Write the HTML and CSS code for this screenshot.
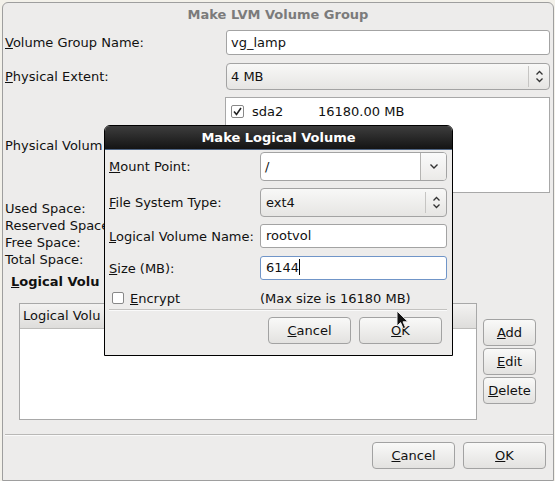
FILE: index.html
```html
<!DOCTYPE html>
<html lang="en">
<head>
    <meta charset="UTF-8">
    <meta name="viewport" content="width=device-width, initial-scale=1.0">
    <title>Make LVM Volume Group</title>
    <link rel="stylesheet" href="styles.css">
</head>
<body>
    <div class="win">
        <div class="win-title">Make LVM Volume Group</div>

        <div class="row row-name">
            <span class="lbl"><u>V</u>olume Group Name:</span>
            <div class="field entry">vg_lamp</div>
        </div>
        <div class="row row-extent">
            <span class="lbl"><u>P</u>hysical Extent:</span>
            <div class="field combo">
                <span class="combo-text">4 MB</span>
                <span class="combo-arrow">
                    <svg width="9" height="13" viewBox="0 0 9 13"><path d="M1.5 4.5 L4.5 1.5 L7.5 4.5 M1.5 8.5 L4.5 11.5 L7.5 8.5" fill="none" stroke="#333" stroke-width="1.3"/></svg>
                </span>
            </div>
        </div>
        <div class="row">
            <span class="lbl">Physical Volum</span>
            <div class="field pv-list">
                <div class="pv-row">
                    <span class="check">
                        <svg width="11" height="11" viewBox="0 0 11 11"><path d="M2 5.5 L4.5 8.5 L9 2" fill="none" stroke="#222" stroke-width="1.6"/></svg>
                    </span>
                    <span class="pv-name">sda2</span>
                    <span>16180.00 MB</span>
                </div>
            </div>
        </div>

        <!-- values sit under the dialog, only the labels show -->
        <div class="space-info">
            <div>Used Space:</div>
            <div>Reserved Space</div>
            <div>Free Space:</div>
            <div>Total Space:</div>
        </div>

        <div class="lv-heading"><u>L</u>ogical Volu</div>

        <div class="lv-area">
            <div class="lv-table">
                <div class="lv-head">Logical Volu</div>
            </div>
            <div class="lv-buttons">
                <button class="btn"><u>A</u>dd</button>
                <button class="btn"><u>E</u>dit</button>
                <button class="btn"><u>D</u>elete</button>
            </div>
        </div>

        <div class="separator"></div>

        <div class="actions">
            <button class="btn btn-wide"><u>C</u>ancel</button>
            <button class="btn btn-wide"><u>O</u>K</button>
        </div>
    </div>

    <div class="dialog">
        <div class="dialog-title">Make Logical Volume</div>
        <div class="dialog-body">
            <div class="drow drow-mount">
                <span class="dlbl"><u>M</u>ount Point:</span>
                <div class="field combo-entry">
                    <span class="combo-entry-text">/</span>
                    <span class="combo-entry-btn">
                        <svg width="10" height="7" viewBox="0 0 10 7"><path d="M1.5 1.5 L5 5 L8.5 1.5" fill="none" stroke="#333" stroke-width="1.4"/></svg>
                    </span>
                </div>
            </div>
            <div class="drow drow-fs">
                <span class="dlbl"><u>F</u>ile System Type:</span>
                <div class="field combo combo-fs">
                    <span class="combo-text">ext4</span>
                    <span class="combo-arrow">
                        <svg width="9" height="13" viewBox="0 0 9 13"><path d="M1.5 4.5 L4.5 1.5 L7.5 4.5 M1.5 8.5 L4.5 11.5 L7.5 8.5" fill="none" stroke="#333" stroke-width="1.3"/></svg>
                    </span>
                </div>
            </div>
            <div class="drow drow-name">
                <span class="dlbl"><u>L</u>ogical Volume Name:</span>
                <div class="field entry entry-small">rootvol</div>
            </div>
            <div class="drow drow-size">
                <span class="dlbl"><u>S</u>ize (MB):</span>
                <div class="field entry entry-small entry-focus">6144<span class="caret"></span></div>
            </div>
            <div class="drow drow-encrypt">
                <span class="dlbl encrypt">
                    <span class="check check-off"></span>
                    <span><u>E</u>ncrypt</span>
                </span>
                <span class="max-size">(Max size is 16180 MB)</span>
            </div>
            <div class="dialog-sep"></div>
            <div class="dialog-actions">
                <button class="btn btn-wide"><u>C</u>ancel</button>
                <button class="btn btn-wide"><u>O</u>K</button>
            </div>
        </div>
    </div>

    <svg class="pointer" width="14" height="21" viewBox="0 0 14 21">
        <path d="M1 1 L1 16 L4.6 12.6 L7.2 18.6 L9.6 17.6 L7 11.8 L12 11.8 Z" fill="#111" stroke="#eee" stroke-width="1"/>
    </svg>
</body>
</html>
```

FILE: styles.css
```css
* {
    box-sizing: border-box;
}

body {
    margin: 0;
    width: 555px;
    height: 481px;
    overflow: hidden;
    background-color: #f3f1ea;
    font-family: "DejaVu Sans", sans-serif;
    font-size: 13px;
    color: #111;
    position: relative;
}

u {
    text-decoration: underline;
    text-underline-offset: 1px;
}

/* main window */
.win {
    margin: 2px 0 0 2px;
    width: 552px;
    height: 479px;
    background-color: #edeceb;
    border: 1px solid #9e9e9e;
    border-radius: 6px 6px 0 0;
}

.win-title {
    height: 22px;
    line-height: 24px;
    text-align: center;
    font-weight: bold;
    color: #7b7b7b;
    margin-bottom: 5px;
}

.row {
    display: flex;
    align-items: center;
    padding: 0 3px 0 2px;
}

.row-name {
    margin-bottom: 8px;
}

.row-extent {
    margin-bottom: 7px;
}

.lbl {
    width: 221px;
}

.field {
    flex: 1;
}

.entry {
    height: 25px;
    line-height: 23px;
    padding-left: 4px;
    background-color: #fff;
    border: 1px solid #a3a3a3;
    border-radius: 3px;
}

.combo {
    display: flex;
    height: 27px;
    align-items: center;
    background: linear-gradient(#f8f8f7, #e6e5e3);
    border: 1px solid #a3a3a3;
    border-radius: 4px;
}

.combo-text {
    flex: 1;
    padding-left: 4px;
}

.combo-arrow {
    width: 21px;
    height: 21px;
    display: flex;
    align-items: center;
    justify-content: center;
    border-left: 1px solid #c6c5c3;
}

.pv-list {
    height: 96px;
    background-color: #fff;
    border: 1px solid #a8a8a8;
    margin-left: -1px;
}

.pv-row {
    display: flex;
    align-items: center;
    height: 16px;
    margin-top: 5px;
    padding-left: 5px;
}

.check {
    width: 13px;
    height: 13px;
    border: 1px solid #888;
    border-radius: 2px;
    background-color: #fff;
    display: flex;
    align-items: center;
    justify-content: center;
    margin-right: 8px;
}

.pv-name {
    width: 66px;
}

.space-info {
    margin-top: 7px;
    padding-left: 2px;
    line-height: 17px;
}

.lv-heading {
    margin-top: 6px;
    padding-left: 8px;
    line-height: 16px;
    font-weight: bold;
}

.lv-area {
    display: flex;
    margin-top: 13px;
    padding-left: 16px;
}

.lv-table {
    width: 458px;
    height: 117px;
    background-color: #fff;
    border: 1px solid #a8a8a8;
}

.lv-head {
    height: 25px;
    line-height: 24px;
    background: linear-gradient(#f3f2f1, #dedddb);
    border-bottom: 1px solid #bdbcba;
    padding-left: 3px;
}

.lv-buttons {
    display: flex;
    flex-direction: column;
    gap: 2px;
    margin-left: 6px;
    padding-top: 16px;
}

.btn {
    font-family: "DejaVu Sans", sans-serif;
    font-size: 13px;
    color: #111;
    width: 53px;
    height: 27px;
    padding: 0;
    background: linear-gradient(#f9f9f8, #e3e2e0);
    border: 1px solid #a2a2a2;
    border-radius: 4px;
}

.btn-wide {
    width: 83px;
}

.separator {
    margin: 14px 0 0 2px;
    height: 2px;
    border-top: 1px solid #b9b8b6;
    border-bottom: 1px solid #fafafa;
}

.actions {
    display: flex;
    justify-content: flex-end;
    gap: 8px;
    margin-top: 6px;
    padding-right: 7px;
}

/* logical volume dialog */
.dialog {
    position: absolute;
    left: 104px;
    top: 125px;
    width: 349px;
    height: 231px;
    background-color: #edeceb;
    border: 1px solid #000;
    border-radius: 6px 6px 0 0;
}

.dialog-title {
    height: 24px;
    line-height: 23px;
    text-align: center;
    font-weight: bold;
    color: #fff;
    background: linear-gradient(#3d3d3d, #141414);
    border-bottom: 1px solid #4f6584;
    border-radius: 5px 5px 0 0;
}

.dialog-body {
    padding: 0 5px 0 4px;
}

.drow {
    display: flex;
    align-items: center;
}

.drow-mount {
    margin-top: 2px;
}

.drow-fs {
    margin-top: 7px;
}

.drow-name {
    margin-top: 7px;
}

.drow-size {
    margin-top: 8px;
}

.drow-encrypt {
    margin-top: 10px;
    height: 16px;
}

.dlbl {
    width: 151px;
}

.combo-entry {
    display: flex;
    height: 29px;
    background-color: #fff;
    border: 1px solid #a3a3a3;
    border-radius: 4px;
    overflow: hidden;
}

.combo-entry-text {
    flex: 1;
    line-height: 27px;
    padding-left: 4px;
}

.combo-entry-btn {
    width: 26px;
    display: flex;
    align-items: center;
    justify-content: center;
    border-left: 1px solid #b5b4b2;
    background: linear-gradient(#fafafa, #ebeae8);
}

.combo-fs {
    height: 29px;
}

.combo-fs .combo-text {
    padding-left: 5px;
}

.entry-small {
    height: 24px;
    line-height: 22px;
    padding-left: 5px;
}

.entry-focus {
    border-color: #7095c8;
}

.caret {
    display: inline-block;
    width: 1px;
    height: 16px;
    background-color: #000;
    vertical-align: -3px;
}

.encrypt {
    display: flex;
    align-items: center;
    padding-left: 3px;
}

.check-off {
    width: 12px;
    height: 12px;
    margin-right: 6px;
}

.dialog-sep {
    margin-top: 3px;
    height: 2px;
    border-top: 1px solid #c3c2c0;
    border-bottom: 1px solid #fafafa;
}

.dialog-actions {
    display: flex;
    justify-content: flex-end;
    gap: 8px;
    margin-top: 6px;
    padding-right: 5px;
}

.pointer {
    position: absolute;
    left: 396px;
    top: 310px;
}
```
